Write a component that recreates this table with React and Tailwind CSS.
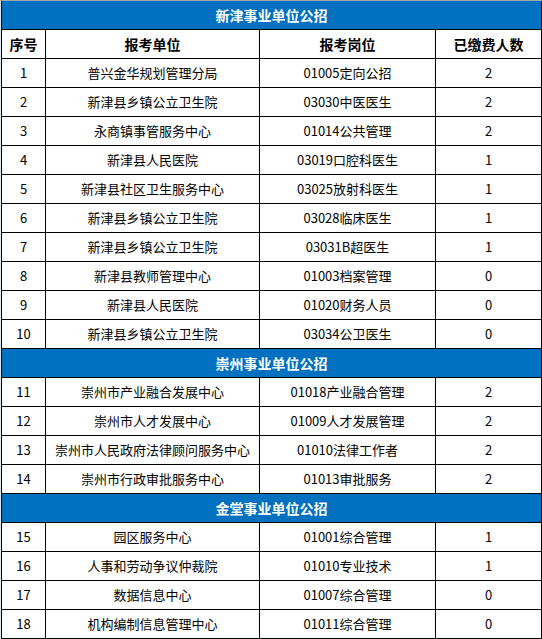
const sections = [
  {
    title: "新津事业单位公招",
    rows: [
      [1, "普兴金华规划管理分局", "01005定向公招", 2],
      [2, "新津县乡镇公立卫生院", "03030中医医生", 2],
      [3, "永商镇事管服务中心", "01014公共管理", 2],
      [4, "新津县人民医院", "03019口腔科医生", 1],
      [5, "新津县社区卫生服务中心", "03025放射科医生", 1],
      [6, "新津县乡镇公立卫生院", "03028临床医生", 1],
      [7, "新津县乡镇公立卫生院", "03031B超医生", 1],
      [8, "新津县教师管理中心", "01003档案管理", 0],
      [9, "新津县人民医院", "01020财务人员", 0],
      [10, "新津县乡镇公立卫生院", "03034公卫医生", 0],
    ],
  },
  {
    title: "崇州事业单位公招",
    rows: [
      [11, "崇州市产业融合发展中心", "01018产业融合管理", 2],
      [12, "崇州市人才发展中心", "01009人才发展管理", 2],
      [13, "崇州市人民政府法律顾问服务中心", "01010法律工作者", 2],
      [14, "崇州市行政审批服务中心", "01013审批服务", 2],
    ],
  },
  {
    title: "金堂事业单位公招",
    rows: [
      [15, "园区服务中心", "01001综合管理", 1],
      [16, "人事和劳动争议仲裁院", "01010专业技术", 1],
      [17, "数据信息中心", "01007综合管理", 0],
      [18, "机构编制信息管理中心", "01011综合管理", 0],
    ],
  },
];

const font = { fontFamily: '"Noto Sans CJK SC", "Liberation Sans", sans-serif' };

function TitleRow({ text }) {
  return (
    <div className="h-[29px] bg-[#0070c0] border-b border-black flex items-center justify-center text-white font-bold text-[14px]">
      {text}
    </div>
  );
}

function Row({ cells, bold }) {
  return (
    <div className={`grid grid-cols-[44px_214px_176px_105px] h-[29px] border-b border-black text-black ${bold ? "font-bold text-[14px]" : "text-[13px]"}`}>
      {cells.map((c, i) => (
        <div
          key={i}
          className={`flex items-center justify-center whitespace-nowrap ${i < 3 ? "border-r border-black" : ""}`}
        >
          {c}
        </div>
      ))}
    </div>
  );
}

export default function App() {
  return (
    <div className="w-[542px] h-[639px] bg-white" style={font}>
      <div className="border-t border-[#a6a6a6] bg-[#dce6f1] pl-[1px]">
        <div className="w-[541px] border-l border-r border-black bg-white">
          {sections.map((s, si) => (
            <div key={si}>
              <TitleRow text={s.title} />
              {si === 0 && <Row bold cells={["序号", "报考单位", "报考岗位", "已缴费人数"]} />}
              {s.rows.map((r) => (
                <Row key={r[0]} cells={r} />
              ))}
            </div>
          ))}
        </div>
      </div>
    </div>
  );
}
